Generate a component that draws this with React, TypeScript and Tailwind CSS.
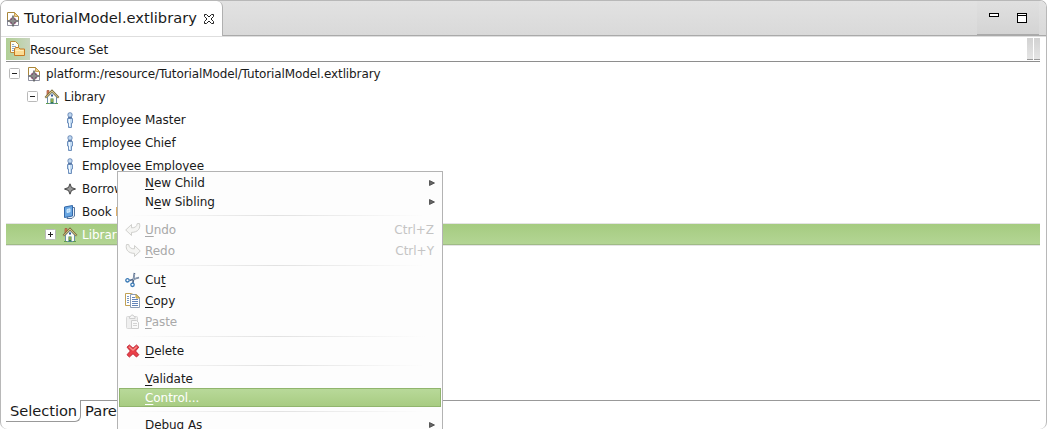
import React from 'react';

type IconProps = { className?: string };

function ModelIcon() {
  return (
    <svg width="16" height="16" viewBox="0 0 16 16" className="shrink-0">
      <path d="M2.500 14.500V1.500h7l4 4v9z" fill="#fff" />
      <path d="M2.500 9V1.500h7l4 4V9" fill="none" stroke="#a8863a" />
      <path d="M2.500 9v5.500h11V9" fill="none" stroke="#8d8f9e" />
      <path d="M9.500 1.500v4h4z" fill="#f0d08c" stroke="#b98f3c" strokeWidth="0.800" />
      <path d="M5.500 7.500l1.500 1.500M10.500 7.500l-1.500 1.500M5.500 12.500l1.500-1.500M10.500 12.500l-1.500-1.500" stroke="#b0508c" strokeWidth="1.800" />
      <path d="M8 4.500l1.500 4 4 1.500-4 1.500-1.500 4-1.500-4-4-1.500 4-1.500z" fill="#8c8c8c" stroke="#555" strokeWidth="0.700" />
    </svg>
  );
}

function HouseIcon() {
  return (
    <svg width="16" height="16" viewBox="0 0 16 16" className="shrink-0">
      <path d="M3.500 8v6.500h9V8L8 3.500z" fill="#fdfdf5" stroke="#6b8dad" />
      <path d="M3 1.500h2v4L3 7.500z" fill="#d9805a" stroke="#a0583c" strokeWidth="0.700" />
      <path d="M1.300 8.800L8 1.800l6.700 7" fill="none" stroke="#7d7140" strokeWidth="2" />
      <path d="M1.800 8.500L8 2l6.200 6.500" fill="none" stroke="#e2cf92" strokeWidth="0.900" />
      <rect x="7" y="5.500" width="2" height="2" fill="#31579b" />
      <rect x="6.500" y="9.500" width="3" height="5" fill="#2f7a54" />
      <path d="M8 10v3" stroke="#f0d840" />
      <path d="M2 14.500h3M11 14.500h3" stroke="#5f9d4d" />
    </svg>
  );
}

function PersonIcon() {
  return (
    <svg width="16" height="16" viewBox="0 0 16 16" className="shrink-0">
      <path d="M5.500 6.500h5v4.500h-1v4.500h-3V11h-1z" fill="#c4dcf3" stroke="#6f90bd" />
      <rect x="6" y="0.800" width="4" height="4.200" rx="1.500" fill="#c0d8f0" stroke="#6787b6" />
      <path d="M7.500 7v7" stroke="#f3faff" />
      <path d="M6 5.700h4" stroke="#3f6194" />
    </svg>
  );
}

function StarIcon() {
  return (
    <svg width="16" height="16" viewBox="0 0 16 16" className="shrink-0">
      <path d="M8 2.800l1.500 3.700L13.500 8 9.500 9.500 8 13.200 6.500 9.500 2.500 8l4-1.500z" fill="#999" stroke="#444" strokeWidth="1" />
    </svg>
  );
}

function BookIcon() {
  return (
    <svg width="16" height="16" viewBox="0 0 16 16" className="shrink-0">
      <path d="M9 3.500h3.500V12L10 14.500H5z" fill="#e9f0f8" stroke="#56749c" />
      <path d="M2.500 3L10.500 1.500v10.500L2.500 13.500z" fill="#68a6e2" stroke="#3468a8" />
      <path d="M5 5.500l3-.7v3L5 8.500z" fill="#a9d2f5" stroke="#e9f6ff" strokeWidth="0.800" />
    </svg>
  );
}

function ResourceSetIcon() {
  return (
    <svg width="16" height="16" viewBox="0 0 16 16" className="shrink-0">
      <path d="M1.500 .500h5l3 3v8h-8z" fill="#fffdf0" stroke="#b98b36" />
      <path d="M3 3.500h2M3 5.500h4M3 7.500h3M3 9.500h2" stroke="#8ba7cc" />
      <path d="M5.500 14.500V8l1-1.500h3L11 8h4.500v6.500z" fill="#fbdc94" stroke="#c87922" />
      <path d="M6.500 9.500h8" stroke="#fff1be" />
    </svg>
  );
}

function UndoIcon({ className = '' }: IconProps) {
  return (
    <svg width="16" height="16" viewBox="0 0 16 16" className={className}>
      <path d="M.7 8L6.500 2.500v3.300c3.500.2 5.300-1.200 5.800-4.300h2.200c1.200 5-1.500 8.800-8 8.900v3.100z" fill="#f5f5f3" stroke="#d0d0cd" />
    </svg>
  );
}

function CutIcon() {
  return (
    <svg width="16" height="16" viewBox="0 0 16 16">
      <path d="M9.500 1L7.900 11M14 5.500L4.500 8.500" stroke="#536a8b" strokeWidth="1.700" />
      <path d="M9.500 2L8.300 8M13.500 5.500L8 7.500" stroke="#b7c2ce" strokeWidth="0.700" />
      <circle cx="2.500" cy="8.300" r="1.700" fill="#fff" stroke="#3778b5" strokeWidth="1.300" />
      <circle cx="7.500" cy="12.800" r="1.700" fill="#fff" stroke="#3778b5" strokeWidth="1.300" />
    </svg>
  );
}

function CopyIcon() {
  return (
    <svg width="16" height="16" viewBox="0 0 16 16">
      <path d="M.5 .500h6l3 2v10h-9z" fill="#fff" stroke="#c1a154" />
      <path d="M2 3.500h2M2 5.500h2M2 7.500h2M2 9.500h2" stroke="#7695c2" />
      <path d="M5.500 1.500h6l3 3v10h-9z" fill="#fff" stroke="#8a9cb5" />
      <path d="M11 1.500v3.500h3.500z" fill="#edd16d" stroke="#bd9a42" />
      <path d="M7 4.500h3M7 6.500h6M7 8.500h6M7 10.500h6M7 12.500h6" stroke="#6284b8" />
    </svg>
  );
}

function PasteIcon() {
  return (
    <svg width="16" height="16" viewBox="0 0 16 16">
      <rect x="1.500" y="2.500" width="11" height="12" rx="1" fill="#efefef" stroke="#d8d8d8" />
      <path d="M4.500 4.500v-2h1l1-1.500h1.500l1 1.500h1v2z" fill="#f6f6f6" stroke="#cecece" />
      <path d="M6.500 6.500h5l2 2v6h-7z" fill="#fafafa" stroke="#cecece" />
      <path d="M8 9.500h4M8 11.500h4" stroke="#d4d4d4" />
    </svg>
  );
}

function DeleteIcon() {
  return (
    <svg width="16" height="16" viewBox="0 0 16 16">
      <path d="M2 4.200l2.400-2.200L8 5.200 11.500 2l2.300 2.200L10.500 8l3.300 3.700-2.300 2.300L8 10.700 4.400 14 2 11.700 5.400 8z" fill="#ea4048" stroke="#c02636" strokeLinejoin="round" />
      <path d="M4 3.800L8 7.300l3.700-3.500" fill="none" stroke="#f4918a" strokeWidth="1.200" />
    </svg>
  );
}

function Expander({ open }: { open: boolean }) {
  return (
    <svg width="11" height="11" viewBox="0 0 11 11" className="shrink-0">
      <rect x=".5" y=".5" width="10" height="10" rx="1" fill="#fff" stroke="#b9b9b9" />
      <path d={open ? 'M3 5.500h5' : 'M3 5.500h5M5.500 3v5'} stroke="#222" />
    </svg>
  );
}

type RowProps = {
  indent: string;
  icon: React.ReactNode;
  label: string;
  open?: boolean;
  selected?: boolean;
  spacing?: string;
};

function TreeRow({ indent, icon, label, open, selected, spacing = 'tracking-[-0.04px]' }: RowProps) {
  return (
    <div
      className={`flex h-[23px] items-center border-y ${indent} ${
        selected
          ? 'border-[#e4e4e4] bg-linear-to-b from-[#a5cb80] to-[#b4d695] text-white shadow-[inset_0_-1px_0_#9fbb86]'
          : 'border-transparent text-[#1a1a1a]'
      }`}
    >
      <span className={`flex shrink-0 ${open === undefined ? 'w-[18px]' : 'w-[17px]'}`}>
        {open !== undefined && <Expander open={open} />}
      </span>
      {icon}
      <span className={`ml-1 whitespace-nowrap ${spacing}`}>{label}</span>
    </div>
  );
}

type ItemProps = {
  before?: string;
  hot: string;
  after: string;
  icon?: React.ReactNode;
  shortcut?: string;
  submenu?: boolean;
  disabled?: boolean;
  active?: boolean;
};

function MenuItem({ before = '', hot, after, icon, shortcut, submenu, disabled, active }: ItemProps) {
  return (
    <div
      className={`flex shrink-0 items-center pl-[5px] ${submenu ? 'pr-[5px]' : 'pr-[6px]'} ${icon ? 'h-[21px]' : 'h-[19px]'} ${
        active
          ? 'border border-[#91b56d] bg-linear-to-b from-[#b8d999] to-[#a8cc82] text-white'
          : disabled
            ? 'border-x border-transparent text-[#a9a9a9]'
            : 'border-x border-transparent text-[#1a1a1a]'
      }`}
    >
      <span className="w-5 shrink-0">{icon}</span>
      <span className="grow tracking-[-0.06px] whitespace-pre">
        {before}
        <span className="underline decoration-1 underline-offset-2">{hot}</span>
        {after}
      </span>
      {shortcut && <span className="text-[#c4c4c4]">{shortcut}</span>}
      {submenu && (
        <svg width="6" height="6" viewBox="0 0 6 6">
          <path d="M.5.500L5.500 3l-5 2.500z" fill="#666" stroke="#333" strokeWidth="0.700" />
        </svg>
      )}
    </div>
  );
}

function Separator() {
  return (
    <div className="flex h-2 shrink-0 items-center pr-4 pl-2">
      <div className="h-px w-full bg-linear-to-r from-transparent via-[#e2e2e2] to-transparent" />
    </div>
  );
}

export default function App() {
  return (
    <div className="relative flex h-[429px] w-[1047px] flex-col overflow-hidden bg-white font-['DejaVu_Sans',sans-serif] text-[12px] leading-none text-[#1a1a1a]">
      <div className="flex min-h-0 grow flex-col overflow-hidden rounded-[7px] border-x border-t border-[#b8b8b8]">
        <header className="flex h-[35px] shrink-0 bg-linear-to-b from-[#e2e2e2] to-[#d9d9d9]">
          <div className="flex w-[222px] shrink-0 items-center rounded-tr-md border-r border-[#b0b0b0] bg-white pl-1">
            <ModelIcon />
            <span className="ml-[3px] text-[14.670px]">TutorialModel.extlibrary</span>
            <svg width="12" height="12" viewBox="0 0 12 12" className="ml-[6px] shrink-0">
              <path d="M1.500 1.500h2L6 4l2.500-2.500h2v2L8 6l2.500 2.500v2h-2L6 8l-2.500 2.500h-2v-2L4 6 1.500 3.500z" fill="#fff" stroke="#222" />
            </svg>
          </div>
          <div className="flex grow justify-end border-b border-[#aaa] pr-[7px]">
            <div className="flex w-[62px] gap-[18px] border-b border-[#aaa] bg-linear-to-b from-[#e0e0e0] to-[#d4d4d4] pt-3 pl-3">
              <div className="h-1 w-[10px] border border-black bg-white" />
              <div className="h-[10px] w-[10px] border border-black bg-white shadow-[inset_0_1px_0_#fff,inset_0_2px_0_#000]" />
            </div>
          </div>
        </header>
        <main className="flex min-h-0 grow flex-col border-t border-[#dedede] px-[5px]">
          <div className="mr-[1px] flex h-[25px] shrink-0 items-center border-b border-[#8e8e8e]">
            <div className="flex h-[22px] w-6 items-center bg-linear-to-r from-[#b0cf95] to-[#c9d5bf] pl-[3px]">
              <ResourceSetIcon />
            </div>
            <span className="grow pt-px tracking-[-0.04px]">Resource Set</span>
            <div className="flex gap-px">
              <div className="h-[22px] w-[6px] border-b border-[#999] bg-linear-to-b from-[#d2d2d2] to-[#e5e5e5]" />
              <div className="h-[22px] w-[6px] border-b border-[#999] bg-linear-to-b from-[#d2d2d2] to-[#e5e5e5]" />
            </div>
          </div>
          <div className="mr-[1px] flex grow flex-col">
            <TreeRow indent="pl-[3px]" open spacing="tracking-[-0.11px]" icon={<ModelIcon />} label="platform:/resource/TutorialModel/TutorialModel.extlibrary" />
            <TreeRow indent="pl-[21px]" open icon={<HouseIcon />} label="Library" />
            <TreeRow indent="pl-[38px]" icon={<PersonIcon />} label="Employee Master" />
            <TreeRow indent="pl-[38px]" icon={<PersonIcon />} label="Employee Chief" />
            <TreeRow indent="pl-[38px]" icon={<PersonIcon />} label="Employee Employee" />
            <TreeRow indent="pl-[38px]" icon={<StarIcon />} label="Borrower" />
            <TreeRow indent="pl-[38px]" icon={<BookIcon />} label="Book Book" />
            <TreeRow indent="pl-[39px]" open={false} selected icon={<HouseIcon />} label="Library" />
          </div>
          <footer className="mr-[1px] flex h-[29px] shrink-0 text-[14.670px]">
            <div className="flex h-[22px] w-[75px] items-center rounded-br-md border-r border-b border-[#999] pt-px pl-1 tracking-[-0.05px]">Selection</div>
            <div className="flex grow border-t border-[#999] pt-[3px] pl-1">Parent</div>
          </footer>
        </main>
      </div>
      <div className="absolute top-[171px] left-[117px] flex h-[270px] w-[326px] flex-col border border-[#b3b3b3] bg-[#fdfdfd] px-px pt-px">
        <MenuItem hot="N" after="ew Child" submenu />
        <MenuItem before="N" hot="e" after="w Sibling" submenu />
        <Separator />
        <MenuItem hot="U" after="ndo" shortcut="Ctrl+Z" disabled icon={<UndoIcon />} />
        <MenuItem hot="R" after="edo" shortcut="Ctrl+Y" disabled icon={<UndoIcon className="-scale-x-100" />} />
        <Separator />
        <MenuItem before="Cu" hot="t" after="" icon={<CutIcon />} />
        <MenuItem hot="C" after="opy" icon={<CopyIcon />} />
        <MenuItem hot="P" after="aste" disabled icon={<PasteIcon />} />
        <Separator />
        <MenuItem hot="D" after="elete" icon={<DeleteIcon />} />
        <Separator />
        <MenuItem hot="V" after="alidate" />
        <MenuItem hot="C" after="ontrol..." active />
        <Separator />
        <MenuItem hot="" after="Debug As" submenu />
      </div>
    </div>
  );
}
